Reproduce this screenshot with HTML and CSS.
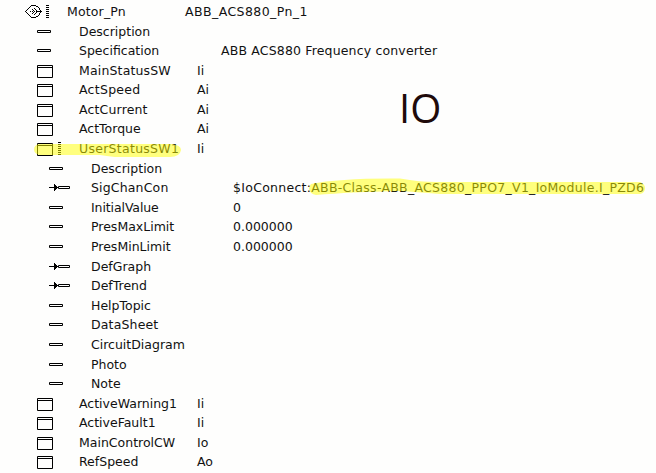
FILE: index.html
```
<!DOCTYPE html>
<html lang="en">
<head>
<meta charset="utf-8">
<title>Motor_Pn</title>
<link rel="stylesheet" href="styles.css">
</head>
<body>
<svg class="defs" width="0" height="0">
  <symbol id="box" viewBox="0 0 24 14"><path d="M.5 .5h15v12h-15zM0 2.5h16" fill="none" stroke="#000"/></symbol>
  <symbol id="bar" viewBox="0 0 24 14"><path d="M.5 4.5h13v2h-13z" fill="none" stroke="#000"/></symbol>
  <symbol id="ref" viewBox="0 0 24 14"><path d="M9.5 4.5h11v2h-11zM0 5.5h6" fill="none" stroke="#000"/><path d="M5 2h1v1h1v1h1v1h1v1h-1v1h-1v1h-1v1h-1z"/></symbol>
</svg>
<main class="tree">
  <div class="row root"><svg class="icon" shape-rendering="crispEdges"><path d="M0 5h1v1h-1zM1 4h1v1h-1zM1 6h1v1h-1zM2 3h1v1h-1zM2 7h1v1h-1zM3 2h1v1h-1zM3 8h1v1h-1zM4 1h1v1h-1zM4 9h1v1h-1zM5 0h1v1h-1zM5 10h1v1h-1zM6 -1h5v1h-5zM6 11h5v1h-5zM11 0h2v1h-2zM11 10h2v1h-2zM13 1h1v1h-1zM13 9h1v1h-1zM14 2h1v2h-1zM14 7h1v2h-1zM15 4h1v3h-1zM5 5h1v1h-1zM7 5h1v1h-1zM9 5h1v1h-1zM11 5h6v1h-6zM7 3h1v1h-1zM8 4h1v1h-1zM8 6h1v1h-1zM7 7h1v1h-1zM9 2h1v1h-1zM10 3h1v1h-1zM11 4h1v1h-1zM11 6h1v1h-1zM10 7h1v1h-1zM9 8h1v1h-1z"/><path d="M22.500 -1v13" fill="none" stroke="#000" stroke-width="3" stroke-dasharray="1 1"/></svg><span class="name loose">Motor_Pn</span><span class="value looser">ABB_ACS880_Pn_1</span></div>
  <div class="row short"><svg class="icon"><use href="#bar"/></svg><span class="name">Description</span></div>
  <div class="row wide"><svg class="icon"><use href="#bar"/></svg><span class="name">Specification</span><span class="value loose">ABB ACS880 Frequency converter</span></div>
  <div class="row short"><svg class="icon"><use href="#box"/></svg><span class="name loose">MainStatusSW</span><span class="value">Ii</span></div>
  <div class="row"><svg class="icon"><use href="#box"/></svg><span class="name wider">ActSpeed</span><span class="value">Ai</span></div>
  <div class="row short"><svg class="icon"><use href="#box"/></svg><span class="name loose">ActCurrent</span><span class="value">Ai</span></div>
  <div class="row"><svg class="icon"><use href="#box"/></svg><span class="name">ActTorque</span><span class="value">Ai</span></div>
  <div class="row"><svg class="icon"><use href="#box"/><path d="M22.500 -1v14" fill="none" stroke="#000" stroke-width="3" stroke-dasharray="1 1"/></svg><span class="name wider">UserStatusSW1</span><span class="value">Ii</span></div>
  <div class="row sub short"><svg class="icon"><use href="#bar"/></svg><span class="name">Description</span></div>
  <div class="row sub"><svg class="icon"><use href="#ref"/></svg><span class="name loose">SigChanCon</span><span class="value wider">$IoConnect:ABB-Class-ABB_ACS880_PPO7_V1_IoModule.I_PZD6</span></div>
  <div class="row sub short"><svg class="icon"><use href="#bar"/></svg><span class="name tight">InitialValue</span><span class="value">0</span></div>
  <div class="row sub"><svg class="icon"><use href="#bar"/></svg><span class="name">PresMaxLimit</span><span class="value">0.000000</span></div>
  <div class="row sub"><svg class="icon"><use href="#bar"/></svg><span class="name">PresMinLimit</span><span class="value">0.000000</span></div>
  <div class="row sub short"><svg class="icon"><use href="#ref"/></svg><span class="name">DefGraph</span></div>
  <div class="row sub"><svg class="icon"><use href="#ref"/></svg><span class="name">DefTrend</span></div>
  <div class="row sub short"><svg class="icon"><use href="#bar"/></svg><span class="name">HelpTopic</span></div>
  <div class="row sub"><svg class="icon"><use href="#bar"/></svg><span class="name loose">DataSheet</span></div>
  <div class="row sub"><svg class="icon"><use href="#bar"/></svg><span class="name">CircuitDiagram</span></div>
  <div class="row sub short"><svg class="icon"><use href="#bar"/></svg><span class="name">Photo</span></div>
  <div class="row sub"><svg class="icon"><use href="#bar"/></svg><span class="name">Note</span></div>
  <div class="row short"><svg class="icon"><use href="#box"/></svg><span class="name">ActiveWarning1</span><span class="value">Ii</span></div>
  <div class="row"><svg class="icon"><use href="#box"/></svg><span class="name">ActiveFault1</span><span class="value">Ii</span></div>
  <div class="row short"><svg class="icon"><use href="#box"/></svg><span class="name">MainControlCW</span><span class="value">Io</span></div>
  <div class="row last"><svg class="icon"><use href="#box"/></svg><span class="name">RefSpeed</span><span class="value">Ao</span></div>
</main>
<svg class="marker" width="656" height="473">
  <path d="M39 144H171Q181 145 181 150Q180 157 170 157L115 157Q106 156 100 155H39Q34 153 34 149.500Q34 145 39 144Z"/>
  <path d="M311 184Q340 178 400 178.500Q420 182 436 182H640Q645 184 645 188Q645 193 640 194H440Q415 192 400 191Q350 192 316 195Q310 194 309 189Q309 186 311 184Z"/>
</svg>
<div class="label">IO</div>
</body>
</html>
```

FILE: styles.css
```
body {
  margin: 0;
  width: 656px;
  height: 473px;
  overflow: hidden;
  position: relative;
  background: #fefefd;
  color: #111;
  font: 12.5px/14px "DejaVu Sans", sans-serif;
}
.defs { position: absolute; }
.tree { padding: 6px 0 0 37px; }
.row {
  height: 20px;
  display: grid;
  grid-template-columns: 42px 118px auto;
  align-items: start;
  white-space: nowrap;
}
.row.short { height: 19px; }
.row.last { height: 17px; }
.row.sub { padding-left: 12px; grid-template-columns: 42px 142px auto; }
.row.wide { grid-template-columns: 42px 142px auto; }
.row.root { margin-left: -12px; }
.icon { display: block; width: 24px; height: 14px; overflow: visible; }
.name, .value { margin-top: -1px; }
.tight { letter-spacing: -0.1px; }
.loose { letter-spacing: 0.16px; }
.wider { letter-spacing: 0.28px; }
.looser { letter-spacing: 0.42px; }
.marker {
  position: absolute;
  left: 0;
  top: 0;
  fill: rgba(255, 255, 0, 0.5);
}
.label {
  position: absolute;
  left: 399px;
  top: 86px;
  font: 40px/44px "Open Sans", sans-serif;
  color: #200a0a;
}
```
